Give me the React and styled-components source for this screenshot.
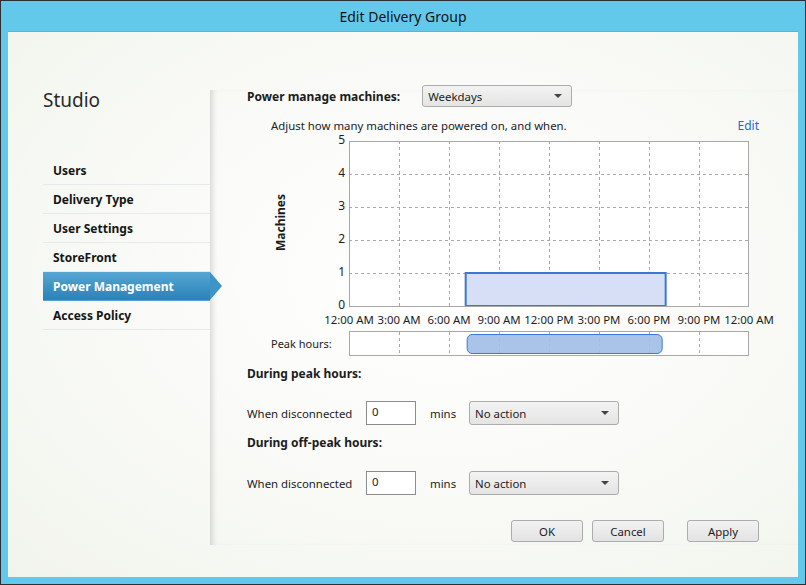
import React from "react";
import styled, { createGlobalStyle } from "styled-components";

const Global = createGlobalStyle`
  html, body { margin: 0; padding: 0; }
  body {
    width: 806px;
    height: 585px;
    overflow: hidden;
    font-family: "Noto Sans", "Open Sans", sans-serif;
    color: #222;
  }
`;

const Window = styled.div`
  width: 806px;
  height: 585px;
  box-sizing: border-box;
  background: #63c9ea;
  border: 1px solid #2c2f33;
  display: flex;
  flex-direction: column;
`;

const TitleBar = styled.div`
  height: 30px;
  display: flex;
  align-items: center;
  justify-content: center;
  font-size: 14px;
  color: #111;
`;

const Body = styled.div`
  flex: 1;
  margin: 0 7px 7px 7px;
  border-top: 1px solid #5ab4d4;
  background:
    radial-gradient(ellipse at 55% 45%, #ffffff 0%, #fafbf8 45%, #f1f4ec 100%);
  display: flex;
`;

const Sidebar = styled.div`
  width: 202px;
  padding-left: 35px;
  padding-top: 58px;
  box-sizing: border-box;
  display: flex;
  flex-direction: column;
`;

const SideTitle = styled.div`
  font-size: 19px;
  color: #2a2a2a;
  height: 66px;
  line-height: 20px;
`;

const Panel = styled.div`
  width: 167px;
  position: relative;
`;

const NavList = styled.div`
  display: flex;
  flex-direction: column;
`;

const NavItem = styled.div`
  height: 28px;
  border-bottom: 1px solid ${(p) => (p.active ? "transparent" : "#e6eaee")};
  display: flex;
  align-items: center;
  padding-left: 10px;
  font-size: 12px;
  font-weight: 700;
  position: relative;
  color: ${(p) => (p.active ? "#fff" : "#151515")};
  background: ${(p) =>
    p.active ? "linear-gradient(#55a6d3, #2a82b8)" : "transparent"};
  ${(p) =>
    p.active &&
    `
    &::after {
      content: "";
      position: absolute;
      right: -12px;
      top: 0;
      border-top: 14px solid transparent;
      border-bottom: 14px solid transparent;
      border-left: 12px solid #3e94c6;
    }
  `}
`;

const Main = styled.div`
  flex: 1;
  padding: 0 40px 0 37px;
  display: flex;
  flex-direction: column;
  box-shadow: inset 6px 0 6px -4px rgba(0, 0, 0, 0.16);
  margin: 58px 0 32px 0;
`;

const TopRow = styled.div`
  display: flex;
  align-items: center;
  gap: 22px;
  margin-top: -5px;
`;

const Bold = styled.div`
  font-size: 12px;
  font-weight: 700;
  color: #1c1c1c;
`;

const Select = styled.div`
  width: ${(p) => p.w}px;
  height: ${(p) => p.h}px;
  box-sizing: border-box;
  border: 1px solid #acacac;
  border-radius: 3px;
  background: linear-gradient(#f3f3f3, #e4e4e4);
  display: flex;
  align-items: center;
  justify-content: space-between;
  padding: 0 9px 0 5px;
  font-size: 11.4px;
  color: #1c1c1c;
  &::after {
    content: "";
    border-left: 4px solid transparent;
    border-right: 4px solid transparent;
    border-top: 4px solid #444;
  }
`;

const HintRow = styled.div`
  display: flex;
  justify-content: space-between;
  align-items: center;
  padding-left: 24px;
  margin-top: 10px;
  font-size: 11.4px;
  height: 16px;
`;

const EditLink = styled.span`
  color: #1a6bd6;
  font-size: 12px;
`;

const Chart = styled.svg`
  display: block;
  overflow: visible;
  margin-top: 3px;
  font-family: "Noto Sans", "Open Sans", sans-serif;
`;

const PeakRow = styled.div`
  display: flex;
  align-items: center;
  padding-left: 24px;
  margin-top: 5px;
  font-size: 11px;
  height: 25px;
`;

const PeakLabel = styled.div`
  width: 78px;
`;

const Section = styled(Bold)`
  margin-top: ${(p) => p.mt}px;
`;

const FieldRow = styled.div`
  display: flex;
  align-items: center;
  margin-top: ${(p) => p.mt}px;
  font-size: 11.4px;
`;

const FieldLabel = styled.div`
  width: 119px;
`;

const NumInput = styled.div`
  width: 50px;
  height: 24px;
  box-sizing: border-box;
  border: 1px solid #8c8c8c;
  background: #fff;
  padding: 2px 5px;
  font-size: 11.4px;
`;

const Unit = styled.div`
  width: 39px;
  margin-left: 14px;
`;

const Buttons = styled.div`
  display: flex;
  justify-content: flex-end;
  gap: 9px;
  margin-top: 25px;
`;

const Button = styled.div`
  width: 72px;
  height: 22px;
  box-sizing: border-box;
  border: 1px solid #acacac;
  border-radius: 3px;
  background: linear-gradient(#f2f2f2, #e3e3e3);
  display: flex;
  align-items: center;
  justify-content: center;
  font-size: 11.4px;
  color: #1c1c1c;
  margin-left: ${(p) => p.ml || 0}px;
`;

const navItems = [
  "Users",
  "Delivery Type",
  "User Settings",
  "StoreFront",
  "Power Management",
  "Access Policy",
];

const xLabels = [
  "12:00 AM",
  "3:00 AM",
  "6:00 AM",
  "9:00 AM",
  "12:00 PM",
  "3:00 PM",
  "6:00 PM",
  "9:00 PM",
  "12:00 AM",
];

function PowerChart() {
  // plot area 400 x 165, origin offset inside svg
  const ox = 102;
  const oy = 5;
  const W = 400;
  const H = 165;
  const hx = W / 24;
  const row = H / 5;
  return (
    <Chart width="512" height="190">
      <rect x={ox} y={oy} width={W} height={H} fill="#fff" />
      {[1, 2, 3, 4, 5, 6, 7].map((i) => (
        <line
          key={"v" + i}
          x1={ox + i * 50 + 0.5}
          x2={ox + i * 50 + 0.5}
          y1={oy}
          y2={oy + H}
          stroke="#a8a8a8"
          strokeDasharray="3 3"
        />
      ))}
      {[1, 2, 3, 4].map((i) => (
        <line
          key={"h" + i}
          x1={ox}
          x2={ox + W}
          y1={oy + i * row + 0.5}
          y2={oy + i * row + 0.5}
          stroke="#a8a8a8"
          strokeDasharray="3 3"
        />
      ))}
      <rect
        x={ox + 7 * hx}
        y={oy + 4 * row}
        width={12 * hx}
        height={row}
        fill="#d7dff7"
        stroke="#3b78d6"
        strokeWidth="2"
      />
      <rect
        x={ox + 0.5}
        y={oy + 0.5}
        width={W - 1}
        height={H}
        fill="none"
        stroke="#a8a8a8"
      />
      {[0, 1, 2, 3, 4, 5].map((v) => (
        <text
          key={"y" + v}
          x={ox - 4}
          y={oy + H - v * row + 3}
          textAnchor="end"
          fontSize="12"
          fill="#1c1c1c"
        >
          {v}
        </text>
      ))}
      {xLabels.map((l, i) => (
        <text
          key={"x" + i}
          x={ox + i * 50}
          y={oy + H + 18}
          textAnchor="middle"
          fontSize="11.4"
          fill="#1c1c1c"
        >
          {l}
        </text>
      ))}
      <text
        x="0"
        y="0"
        transform={`translate(38 ${oy + H / 2 - 1}) rotate(-90)`}
        textAnchor="middle"
        fontSize="12"
        fontWeight="700"
        fill="#1c1c1c"
      >
        Machines
      </text>
    </Chart>
  );
}

function PeakStrip() {
  const W = 400;
  const hx = W / 24;
  return (
    <svg width="400" height="25" style={{ display: "block" }}>
      <rect x="0.5" y="0.5" width={W - 1} height="24" fill="#fff" stroke="#a8a8a8" />
      {[1, 2, 3, 4, 5, 6, 7].map((i) => (
        <line
          key={i}
          x1={i * 50 + 0.5}
          x2={i * 50 + 0.5}
          y1="1"
          y2="24"
          stroke="#a8a8a8"
          strokeDasharray="3 3"
        />
      ))}
      <rect
        x={7 * hx + 1.5}
        y="3.5"
        width={12 * hx - 5}
        height="19"
        rx="5"
        fill="#a1bee7"
        fillOpacity="0.9"
        stroke="#3b78d6"
      />
    </svg>
  );
}

export default function App() {
  return (
    <>
      <Global />
      <Window>
        <TitleBar>Edit Delivery Group</TitleBar>
        <Body>
          <Sidebar>
            <SideTitle>Studio</SideTitle>
            <Panel>
              <NavList>
                {navItems.map((n) => (
                  <NavItem key={n} active={n === "Power Management"}>
                    {n}
                  </NavItem>
                ))}
              </NavList>
            </Panel>
          </Sidebar>
          <Main>
            <TopRow>
              <Bold>Power manage machines:</Bold>
              <Select w={150} h={22}>
                Weekdays
              </Select>
            </TopRow>
            <HintRow>
              <span>Adjust how many machines are powered on, and when.</span>
              <EditLink>Edit</EditLink>
            </HintRow>
            <PowerChart />
            <PeakRow>
              <PeakLabel>Peak hours:</PeakLabel>
              <PeakStrip />
            </PeakRow>
            <Section mt={9}>During peak hours:</Section>
            <FieldRow mt={19}>
              <FieldLabel>When disconnected</FieldLabel>
              <NumInput>0</NumInput>
              <Unit>mins</Unit>
              <Select w={150} h={24}>
                No action
              </Select>
            </FieldRow>
            <Section mt={9}>During off-peak hours:</Section>
            <FieldRow mt={20}>
              <FieldLabel>When disconnected</FieldLabel>
              <NumInput>0</NumInput>
              <Unit>mins</Unit>
              <Select w={150} h={24}>
                No action
              </Select>
            </FieldRow>
            <Buttons>
              <Button>OK</Button>
              <Button>Cancel</Button>
              <Button ml={14}>Apply</Button>
            </Buttons>
          </Main>
        </Body>
      </Window>
    </>
  );
}
